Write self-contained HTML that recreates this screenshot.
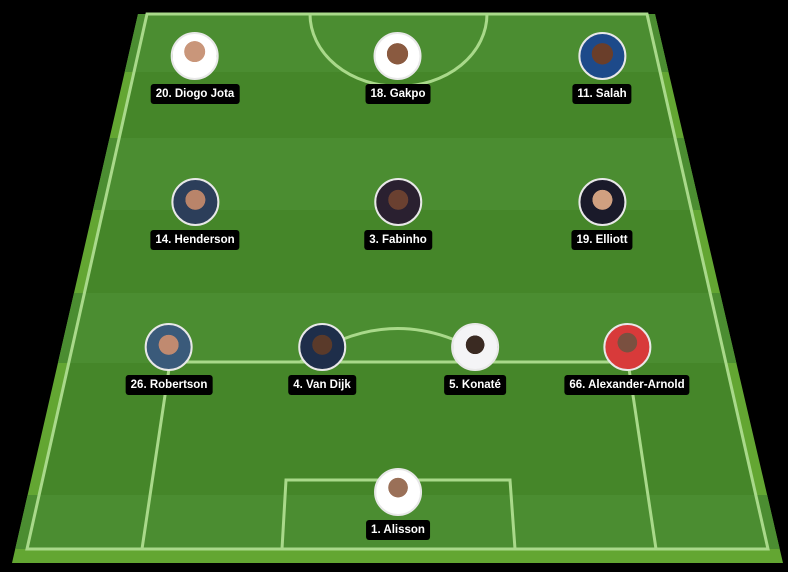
<!DOCTYPE html>
<html><head><meta charset="utf-8"><style>
html,body{margin:0;padding:0;background:#000;width:788px;height:572px;overflow:hidden}
.p{position:absolute;transform:translateX(-50%);text-align:center}
.av{width:44px;height:44px;border-radius:50%;border:2px solid #e8e8e8;margin:0 auto;overflow:hidden;box-sizing:content-box}
.lb{display:inline-block;background:#000;color:#fff;font:bold 11.5px "Liberation Sans",sans-serif;padding:4px 5px;border-radius:3px;margin-top:4px;white-space:nowrap}
</style></head><body>
<svg width="788" height="572" style="position:absolute;left:0;top:0">
<defs><clipPath id="c"><polygon points="138,14 655,14 783,563 12,563"/></clipPath></defs>
<polygon points="138,14 655,14 783,563 12,563" fill="#63a632"/>
<polygon points="147,14 647,14 768,549 27,549" fill="#458629"/>
<g clip-path="url(#c)">
<rect x="0" y="14" width="788" height="58" fill="#4b8d31"/>
<rect x="0" y="138" width="788" height="72" fill="#4b8d31"/>
<rect x="0" y="293" width="788" height="70" fill="#4b8d31"/>
<rect x="0" y="495" width="788" height="54" fill="#4b8d31"/>
</g>
<g fill="none" stroke="#a9d98a" stroke-width="3">
<polygon points="147,14 647,14 768,549 27,549"/>
<path d="M310,14 A88,72 0 0 0 487,14"/>
<path d="M142,549 L170,362 L628,362 L656,549"/>
<path d="M282,549 L286,480 L510,480 L515,549"/>
<path d="M300,362 Q398,295 495,362"/>
</g>
</svg>
<div class="p" style="left:195px;top:32px"><div class="av" style="background:radial-gradient(circle at 50% 40%,#c9967a 0 30%,#fff 31%);"></div><div class="lb">20. Diogo Jota</div></div>
<div class="p" style="left:398px;top:32px"><div class="av" style="background:radial-gradient(circle at 50% 45%,#8a5a40 0 32%,#fff 33%);"></div><div class="lb">18. Gakpo</div></div>
<div class="p" style="left:602px;top:32px"><div class="av" style="background:radial-gradient(circle at 50% 45%,#6a3e2a 0 32%,#1d4a8a 33%);"></div><div class="lb">11. Salah</div></div>
<div class="p" style="left:195px;top:178px"><div class="av" style="background:radial-gradient(circle at 50% 45%,#b9846a 0 30%,#2c3e5a 31%);"></div><div class="lb">14. Henderson</div></div>
<div class="p" style="left:398px;top:178px"><div class="av" style="background:radial-gradient(circle at 50% 45%,#6a4030 0 30%,#2a2030 31%);"></div><div class="lb">3. Fabinho</div></div>
<div class="p" style="left:602px;top:178px"><div class="av" style="background:radial-gradient(circle at 50% 45%,#d0a080 0 30%,#1a1a2a 31%);"></div><div class="lb">19. Elliott</div></div>
<div class="p" style="left:169px;top:323px"><div class="av" style="background:radial-gradient(circle at 50% 45%,#c08a70 0 30%,#3a5a7a 31%);"></div><div class="lb">26. Robertson</div></div>
<div class="p" style="left:322px;top:323px"><div class="av" style="background:radial-gradient(circle at 50% 45%,#5a3a2a 0 30%,#1e2e4a 31%);"></div><div class="lb">4. Van Dijk</div></div>
<div class="p" style="left:475px;top:323px"><div class="av" style="background:radial-gradient(circle at 50% 45%,#3a2a22 0 28%,#f4f4f6 29%);"></div><div class="lb">5. Konaté</div></div>
<div class="p" style="left:627px;top:323px"><div class="av" style="background:radial-gradient(circle at 50% 40%,#7a5040 0 28%,#d83a3a 29%);"></div><div class="lb">66. Alexander-Arnold</div></div>
<div class="p" style="left:398px;top:468px"><div class="av" style="background:radial-gradient(circle at 50% 40%,#9a7058 0 28%,#fff 29%);"></div><div class="lb">1. Alisson</div></div>
</body></html>
